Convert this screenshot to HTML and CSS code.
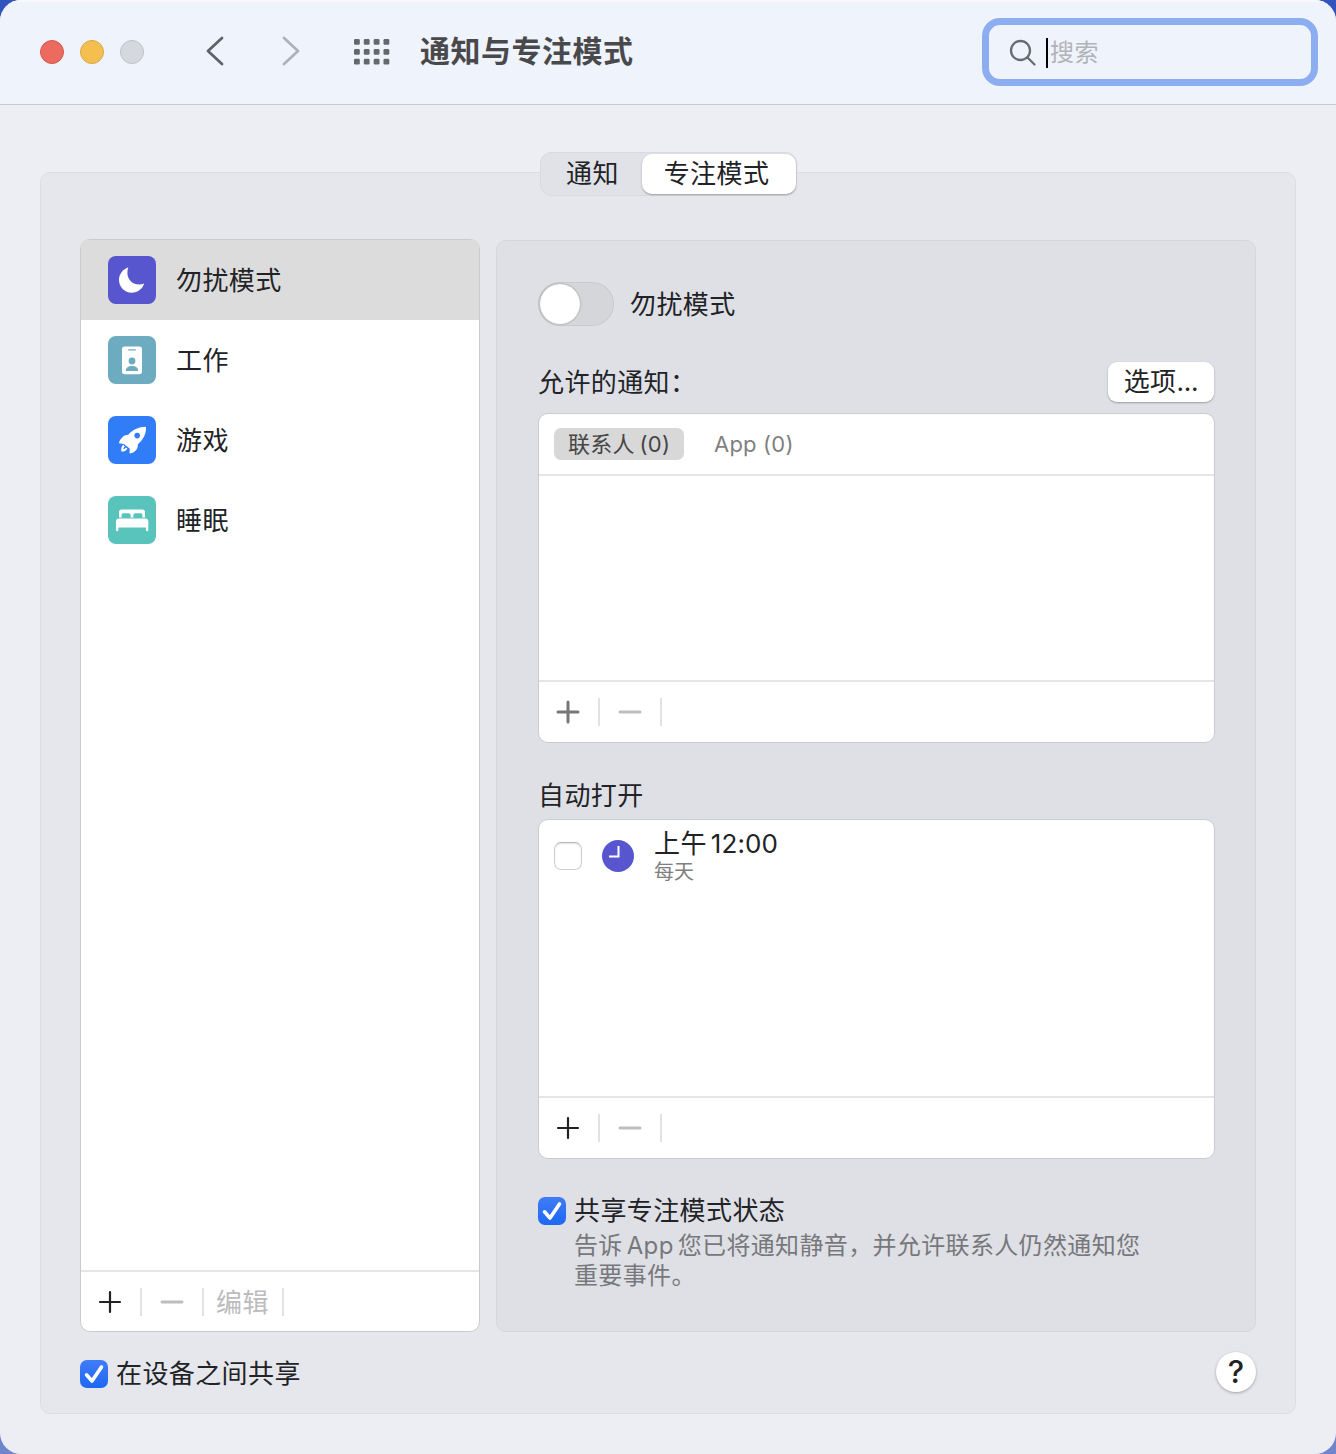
FILE: index.html
```
<!DOCTYPE html>
<html lang="zh-CN">

<head>
    <meta charset="utf-8">
    <meta name="viewport" content="width=device-width, initial-scale=1.0">
    <title>通知与专注模式</title>
    <link rel="stylesheet" href="styles.css">
</head>

<body>
    <div class="window">
        <header class="toolbar">
            <div class="lights">
                <span class="light red"></span>
                <span class="light yellow"></span>
                <span class="light grey"></span>
            </div>
            <nav class="nav">
                <svg class="chevron" viewBox="0 0 24 32"><path d="M18 3 L4 16 L18 29"/></svg>
                <svg class="chevron disabled" viewBox="0 0 24 32"><path d="M5 3 L19 16 L5 29"/></svg>
            </nav>
            <svg class="grid-icon" viewBox="0 0 38 28">
                <g id="prik">
                    <rect x="1" y="1" width="5.8" height="5.8" rx="1.3"/>
                    <rect x="10.8" y="1" width="5.8" height="5.8" rx="1.3"/>
                    <rect x="20.7" y="1" width="5.8" height="5.8" rx="1.3"/>
                    <rect x="30.5" y="1" width="5.8" height="5.8" rx="1.3"/>
                </g>
                <use href="#prik" y="9.9"/>
                <use href="#prik" y="19.7"/>
            </svg>
            <h1>通知与专注模式</h1>
            <div class="search">
                <svg viewBox="0 0 28 28"><circle cx="11.5" cy="11.5" r="9.5"/><path d="M18.5 18.5 L25.5 25.5"/></svg>
                <span class="caret"></span>
                <span class="placeholder">搜索</span>
            </div>
        </header>

        <main>
            <div class="tabs">
                <button class="tab">通知</button>
                <button class="tab valgt">专注模式</button>
            </div>

            <section class="panel">
                <div class="columns">
                    <div class="sidebar">
                        <ul class="modes">
                            <li class="mode active">
                                <svg class="mode-icon moon" viewBox="0 0 48 48"><path d="M20.3 11.2C14.8 13.2 11 18 11 24c0 7 5.6 12.7 12.7 12.7 6 0 10.9-3.7 12.4-9.1-1.5.6-3 .9-4.7.9-6.9 0-12-5-12-11.6 0-2.1.2-4 .9-5.7z"/></svg>
                                <span>勿扰模式</span>
                            </li>
                            <li class="mode">
                                <svg class="mode-icon badge" viewBox="0 0 48 48">
                                    <rect x="14" y="10.6" width="20" height="27.6" rx="2.6"/>
                                    <rect class="cut" x="20" y="13.2" width="8" height="1.4" rx=".7"/>
                                    <circle class="cut" cx="24" cy="25" r="3.4"/>
                                    <path class="cut" d="M17.8 35c0-3.2 2.4-4.9 6.2-4.9s6.2 1.7 6.2 4.9z"/>
                                </svg>
                                <span>工作</span>
                            </li>
                            <li class="mode">
                                <svg class="mode-icon rocket" viewBox="0 0 48 48">
                                    <path d="M38 10.8C30.500 10.800 24.500 14 20.300 18.800c-4.300 0-7.800 3.400-9.300 7.800l.6.900c1.600-.3 3 0 4.300.4l5.700 4.700c.4 1.400.1 2.800-.3 4.200l.8.6c4.500-.8 8-4.200 7.800-9.200C35 24 38.300 18.500 38 10.800z"/>
                                    <path d="M15.500 28.800c-2 1.200-2.600 3.600-2.200 6.700 3 .1 5.500-.6 6-3.300l-1.700-.7c-.4 1-1.200 1.500-2.100 1.500 0-1 .4-1.900 1.300-2.500z"/>
                                    <circle class="cut" cx="29.2" cy="19.6" r="2.8"/>
                                </svg>
                                <span>游戏</span>
                            </li>
                            <li class="mode">
                                <svg class="mode-icon bed" viewBox="0 0 48 48">
                                    <path d="M11 21.4V16.2a2.600 2.600 0 0 1 2.600-2.600h20.800a2.600 2.600 0 0 1 2.600 2.600v5.200h-2.600v-2.400a1.700 1.700 0 0 0-1.700-1.700h-5.600a1.700 1.700 0 0 0-1.700 1.700v2.400h-2.800v-2.400a1.700 1.700 0 0 0-1.700-1.700h-5.600a1.700 1.700 0 0 0-1.700 1.700v2.400z"/>
                                    <path d="M8 34V25.500a3 3 0 0 1 3-3h26.300a3 3 0 0 1 3 3V34a1.200 1.200 0 0 1-2.400 0v-2.600H10.400V34A1.200 1.200 0 0 1 8 34z"/>
                                </svg>
                                <span>睡眠</span>
                            </li>
                        </ul>
                        <div class="actions">
                            <svg class="plus" viewBox="0 0 24 24"><path d="M2 12H22M12 2V22"/></svg>
                            <i class="sep"></i>
                            <svg class="minus" viewBox="0 0 24 24"><path d="M2 12H22"/></svg>
                            <i class="sep"></i>
                            <span class="edit">编辑</span>
                            <i class="sep"></i>
                        </div>
                    </div>

                    <div class="detail">
                        <div class="switch-row">
                            <div class="switch"><span class="knob"></span></div>
                            <span class="switch-label">勿扰模式</span>
                        </div>

                        <div class="label-row">
                            <span class="label">允许的通知：</span>
                            <button class="options">选项<span class="dots">...</span></button>
                        </div>
                        <div class="box allowed">
                            <div class="filters">
                                <span class="filter valgt">联系人<span class="count">(0)</span></span>
                                <span class="filter">App (0)</span>
                            </div>
                            <div class="empty"></div>
                            <div class="actions">
                                <svg class="plus dim" viewBox="0 0 24 24"><path d="M2 12H22M12 2V22"/></svg>
                                <i class="sep"></i>
                                <svg class="minus" viewBox="0 0 24 24"><path d="M2 12H22"/></svg>
                                <i class="sep"></i>
                            </div>
                        </div>

                        <div class="auto-label">自动打开</div>
                        <div class="box auto">
                            <div class="schedule">
                                <span class="check"></span>
                                <svg class="clock" viewBox="0 0 32 32"><circle cx="16" cy="16" r="16"/><path d="M16.5 6V16.5H7"/></svg>
                                <div class="time">
                                    <div class="hour">上午<span class="latin">12:00</span></div>
                                    <div class="days">每天</div>
                                </div>
                            </div>
                            <div class="actions">
                                <svg class="plus" viewBox="0 0 24 24"><path d="M2 12H22M12 2V22"/></svg>
                                <i class="sep"></i>
                                <svg class="minus" viewBox="0 0 24 24"><path d="M2 12H22"/></svg>
                                <i class="sep"></i>
                            </div>
                        </div>

                        <div class="check-row">
                            <svg class="check on" viewBox="0 0 28 28"><path d="M6.5 14.8L12 21L21.5 7"/></svg>
                            <span>共享专注模式状态</span>
                        </div>
                        <p class="hint">告诉<span class="app">App</span>您已将通知静音，并允许联系人仍然通知您<br>重要事件。</p>
                    </div>
                </div>

                <footer class="bottom">
                    <div class="check-row">
                        <svg class="check on" viewBox="0 0 28 28"><path d="M6.5 14.8L12 21L21.5 7"/></svg>
                        <span>在设备之间共享</span>
                    </div>
                    <button class="help">?</button>
                </footer>
            </section>
        </main>
    </div>
</body>

</html>
```
FILE: styles.css
```
*,
body * {
    box-sizing: border-box;
}

body {
    margin: 0;
    background: linear-gradient(#3454bd 0, #3454bd 50%, #7085cb 100%);
    font-family: Inter, "Noto Sans CJK SC", sans-serif;
    font-size: 26px;
    line-height: 36px;
    letter-spacing: 0.4px;
    color: #222326;
}

svg {
    display: block;
    flex: none;
}

button {
    border: none;
    padding: 0;
    font: inherit;
    letter-spacing: inherit;
    color: inherit;
}

.window {
    height: 1454px;
    border-radius: 21px;
    overflow: hidden;
    background-color: #edeef3;
}

/* toolbar */
.toolbar {
    display: flex;
    align-items: center;
    height: 105px;
    padding: 0 18px 1px 40px;
    background-color: #eff3fb;
    border-bottom: 1px solid #c8cacf;
    box-shadow: inset 0 2px 0 #f7f9fc;
}

.lights {
    display: flex;
    gap: 16px;
}

.light {
    width: 24px;
    height: 24px;
    border-radius: 50%;
    border: 1px solid #c0c2c8;
    background-color: #d6d8df;
}

.light.red {
    background-color: #ec6a5e;
    border-color: #d25a50;
}

.light.yellow {
    background-color: #f5bf4f;
    border-color: #d9a548;
}

.nav {
    display: flex;
    gap: 51px;
    margin: 0 50px 2px 60px;
}

.chevron {
    width: 24px;
    height: 32px;
    fill: none;
    stroke: #606269;
    stroke-width: 2.8;
    stroke-linecap: round;
    stroke-linejoin: round;
}

.chevron.disabled {
    stroke: #afb1b8;
}

.grid-icon {
    width: 38px;
    height: 28px;
    fill: #65676e;
}

h1 {
    margin: 0 0 2px 29px;
    font-size: 30px;
    font-weight: 700;
    letter-spacing: 0.5px;
    color: #49494c;
}

.search {
    display: flex;
    align-items: center;
    width: 336px;
    height: 68px;
    margin-left: auto;
    padding-left: 20px;
    border: 7px solid #8caef1;
    border-radius: 18px;
    font-size: 24px;
    color: #b1b3b9;
}

.search svg {
    width: 28px;
    height: 28px;
    margin-top: 2px;
    fill: none;
    stroke: #696b70;
    stroke-width: 2.3;
    stroke-linecap: round;
}

.caret {
    width: 2px;
    height: 30px;
    margin: 2px 2px 0 9px;
    background-color: #000;
}

.placeholder {
    margin-top: 3px;
}

/* tabs lie over the top edge of the panel */
main {
    padding: 47px 40px 0;
}

.tabs {
    position: relative;
    z-index: 1;
    display: flex;
    width: 257px;
    height: 44px;
    margin: 0 auto -24px;
    padding: 2px 1px 2px 2px;
    background-color: #e1e2e7;
    border-radius: 12px;
    box-shadow: inset 0 0 0 1px #d9dadf;
}

.tab {
    width: 100px;
    height: 40px;
    padding-left: 2px;
    line-height: 38px;
    background: none;
}

.tab.valgt {
    width: 154px;
    padding: 0 4px 0 0;
    background-color: #fff;
    border-radius: 10px;
    box-shadow: 0 1px 2px rgba(0, 0, 0, 0.3);
}

.panel {
    height: 1242px;
    padding: 66px 39px 0;
    background-color: #e6e7ec;
    border: 1px solid #dcdde2;
    border-radius: 10px;
}

.columns {
    display: flex;
    gap: 16px;
    height: 1093px;
}

.sidebar {
    display: flex;
    flex-direction: column;
    width: 400px;
    background-color: #fff;
    border: 1px solid #c9cace;
    border-radius: 10px;
    overflow: hidden;
}

.modes {
    flex: 1;
    margin: 0;
    padding: 0;
    list-style: none;
}

.mode {
    display: flex;
    align-items: center;
    gap: 20px;
    height: 80px;
    padding-left: 27px;
}

.mode span,
.switch-label,
.label {
    padding-top: 2px;
}

.mode.active {
    background-color: #dcdcdc;
}

.mode-icon {
    width: 48px;
    height: 48px;
    border-radius: 8px;
    fill: #fff;
}

.moon {
    background-color: #5756ce;
}

.badge {
    background-color: #6dabc1;
}

.badge .cut {
    fill: #6dabc1;
}

.rocket {
    background-color: #317cf7;
}

.rocket .cut {
    fill: #317cf7;
}

.bed {
    background-color: #59c4bc;
}

.actions {
    display: flex;
    align-items: center;
    height: 61px;
    padding-left: 17px;
    border-top: 2px solid #e5e5e6;
}

.plus,
.minus {
    width: 24px;
    height: 24px;
    fill: none;
    stroke: #222;
    stroke-width: 2.2;
    stroke-linecap: round;
}

.plus.dim {
    stroke: #777;
    stroke-width: 3;
}

.minus {
    stroke: #bdbdbe;
    stroke-width: 3;
}

.sep {
    width: 2px;
    height: 28px;
    margin: 0 18px;
    background-color: #e2e2e4;
}

.edit {
    margin: 2px -5px 0 -6px;
    color: #bcbcbe;
}

.detail {
    width: 760px;
    height: 1092px;
    margin-top: 1px;
    padding: 41px;
    background-color: #dfe0e5;
    border: 1px solid #d6d7dc;
    border-radius: 10px;
}

.switch-row {
    display: flex;
    align-items: center;
    gap: 16px;
    height: 44px;
}

.switch {
    width: 76px;
    height: 44px;
    padding: 2px;
    background-color: #d5d6d9;
    border-radius: 22px;
    box-shadow: inset 0 0 0 1px #c9cacd;
}

.knob {
    display: block;
    width: 40px;
    height: 40px;
    background-color: #fff;
    border-radius: 50%;
    box-shadow: 0 0 2px rgba(0, 0, 0, 0.4);
}

.label-row {
    display: flex;
    align-items: center;
    justify-content: space-between;
    height: 40px;
    margin: 36px 0 11px;
}

.options {
    width: 106px;
    height: 40px;
    line-height: 38px;
    background-color: #fff;
    border-radius: 9px;
    box-shadow: 0 1px 2px rgba(0, 0, 0, 0.3);
}

.dots {
    letter-spacing: -0.2px;
}

.box {
    display: flex;
    flex-direction: column;
    width: 677px;
    background-color: #fff;
    border: 1px solid #cbccd0;
    border-radius: 10px;
}

.allowed {
    height: 330px;
}

.filters {
    display: flex;
    align-items: center;
    gap: 15px;
    height: 62px;
    padding-left: 15px;
    border-bottom: 2px solid #e5e5e6;
}

.filter {
    height: 32px;
    padding: 0 15px;
    border-radius: 7px;
    font-size: 22px;
    line-height: 32px;
    letter-spacing: 0.2px;
    color: #7f7f80;
}

.filter.valgt {
    width: 130px;
    padding: 0 0 0 14px;
    background-color: #d8d8d8;
    color: #454546;
}

.count {
    margin-left: 5px;
}

.empty {
    flex: 1;
}

.box .actions {
    height: 62px;
}

.auto-label {
    margin: 35px 0 5px;
}

.auto {
    height: 340px;
}

.schedule {
    display: flex;
    flex: 1;
    align-items: flex-start;
    padding: 6px 15px;
}

.check {
    width: 28px;
    height: 28px;
    border-radius: 7px;
}

.schedule .check {
    margin: 16px 20px 0 0;
    border: 1px solid #d0d0d1;
    border-top-color: #b9b9ba;
    box-shadow: inset 0 1px 2px rgba(0, 0, 0, 0.12);
}

.clock {
    width: 32px;
    height: 32px;
    margin: 14px 20px 0 0;
    fill: #5756ce;
}

.clock path {
    fill: none;
    stroke: #fff;
    stroke-width: 2;
}

.hour {
    line-height: 36px;
}

.latin {
    margin-left: 4px;
    letter-spacing: 0.1px;
}

.days {
    margin-top: -2px;
    font-size: 20px;
    line-height: 24px;
    letter-spacing: 0;
    color: #808081;
}

.check-row {
    display: flex;
    align-items: center;
    gap: 8px;
}

.detail .check-row {
    margin-top: 34px;
}

.check.on {
    background: linear-gradient(#417cf8, #1d68f3);
    fill: none;
    stroke: #fff;
    stroke-width: 3.6;
    stroke-linecap: round;
    stroke-linejoin: round;
}

.hint {
    margin: 2px 0 0 36px;
    font-size: 24px;
    line-height: 30px;
    letter-spacing: 0.35px;
    white-space: nowrap;
    color: #77787c;
}

.app {
    margin: 0 4px;
}

.bottom {
    display: flex;
    align-items: center;
    justify-content: space-between;
    height: 40px;
    margin-top: 20px;
}

.bottom .check-row {
    margin-top: 4px;
}

.help {
    width: 40px;
    height: 40px;
    background-color: #fff;
    border-radius: 50%;
    box-shadow: 0 1px 3px rgba(0, 0, 0, 0.3);
    font-size: 31px;
    font-weight: 500;
    line-height: 40px;
    letter-spacing: 0;
}
```
